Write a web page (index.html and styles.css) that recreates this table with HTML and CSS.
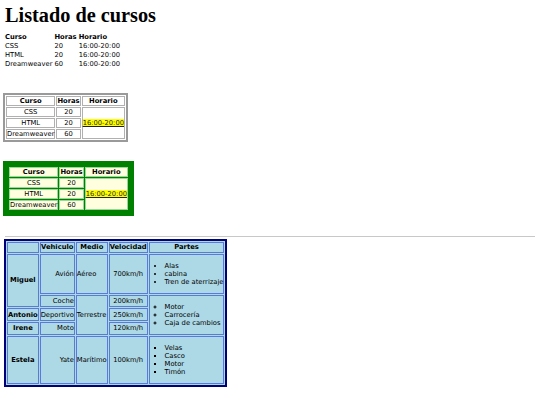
FILE: index.html
```html
<!DOCTYPE html>
<html lang="es">
<head>
<meta charset="utf-8">
<title>Listado de cursos</title>
<link rel="stylesheet" href="styles.css">
</head>
<body>
<h1 class="title">Listado de cursos</h1>

<table class="plain">
  <tr><th>Curso</th><th>Horas</th><th>Horario</th></tr>
  <tr><td>CSS</td><td>20</td><td>16:00-20:00</td></tr>
  <tr><td>HTML</td><td>20</td><td>16:00-20:00</td></tr>
  <tr><td>Dreamweaver</td><td>60</td><td>16:00-20:00</td></tr>
</table>

<table class="boxed">
  <tr><th>Curso</th><th>Horas</th><th>Horario</th></tr>
  <tr><td>CSS</td><td>20</td><td rowspan="3"><span class="hl">16:00-20:00</span></td></tr>
  <tr><td>HTML</td><td>20</td></tr>
  <tr><td>Dreamweaver</td><td>60</td></tr>
</table>

<table class="green">
  <tr><th>Curso</th><th>Horas</th><th>Horario</th></tr>
  <tr><td>CSS</td><td>20</td><td rowspan="3"><span class="hl">16:00-20:00</span></td></tr>
  <tr><td>HTML</td><td>20</td></tr>
  <tr><td>Dreamweaver</td><td>60</td></tr>
</table>

<hr class="rule">

<table class="vehicles">
  <tr><th></th><th>Vehiculo</th><th>Medio</th><th>Velocidad</th><th>Partes</th></tr>
  <tr>
    <th rowspan="2">Miguel</th>
    <td class="veh">Avión</td>
    <td>Aéreo</td>
    <td class="vel">700km/h</td>
    <td><ul class="disc"><li>Alas</li><li>cabina</li><li>Tren de aterrizaje</li></ul></td>
  </tr>
  <tr>
    <td class="veh">Coche</td>
    <td rowspan="3">Terrestre</td>
    <td class="vel">200km/h</td>
    <td rowspan="3"><ul class="circle"><li>Motor</li><li>Carrocería</li><li>Caja de cambios</li></ul></td>
  </tr>
  <tr>
    <th>Antonio</th>
    <td class="veh">Deportivo</td>
    <td class="vel">250km/h</td>
  </tr>
  <tr>
    <th>Irene</th>
    <td class="veh">Moto</td>
    <td class="vel">120km/h</td>
  </tr>
  <tr>
    <th>Estela</th>
    <td class="veh">Yate</td>
    <td>Marítimo</td>
    <td class="vel">100km/h</td>
    <td><ul class="square"><li>Velas</li><li>Casco</li><li>Motor</li><li>Timón</li></ul></td>
  </tr>
</table>
</body>
</html>
```

FILE: styles.css
```css
html, body {
  background: #ffffff;
}
body {
  margin: 0;
  padding: 3px 3px 0 3px;
  font-family: "DejaVu Sans", Verdana, sans-serif;
  font-size: 6.75px;
  color: #000;
}
.title {
  font-family: "Liberation Serif", "Times New Roman", serif;
  font-size: 20.3px;
  font-weight: bold;
  margin: 1px 0 6px 2px;
}
table {
  font-size: 6.75px;
  font-family: "DejaVu Sans", Verdana, sans-serif;
}
th {
  font-weight: bold;
}

/* table 1 */
.plain {
  border-collapse: separate;
  border-spacing: 0;
  margin-left: 1px;
}
.plain th, .plain td {
  padding: 0.4px 1px;
  text-align: left;
  vertical-align: middle;
}

/* table 2 */
.boxed {
  margin-top: 25px;
  border: 2px solid #9a9a9a;
  border-spacing: 1px;
  background: #fff;
}
.boxed th, .boxed td {
  border: 1px solid #b0b0b0;
  background: #fff;
  padding: 0;
  text-align: center;
  vertical-align: middle;
}

.hl {
  background: #ffff00;
  text-decoration: underline;
  color: #222;
}

/* table 3 */
.green {
  margin-top: 19px;
  border: 5px solid #008000;
  border-spacing: 1px;
  background: #008000;
}
.green th, .green td {
  border: 1px solid #98d898;
  background: #ffffe0;
  padding: 0;
  text-align: center;
  vertical-align: middle;
}

.rule {
  margin: 20px 2px 2px 2px;
  border: 0;
  border-top: 1px solid #c8c8c8;
  height: 0;
}

/* table 4 */
.vehicles {
  margin-left: 1px;
  border: 2px solid #00007a;
  border-spacing: 1px;
  background: #add8e6;
}
.vehicles th, .vehicles td {
  border: 1px solid #5a7ad8;
  background: #add8e6;
  padding: 0.25px 0;
  vertical-align: middle;
  text-align: left;
}
.vehicles th {
  text-align: center;
}
.vehicles .veh {
  text-align: right;
}
.vehicles .vel {
  text-align: center;
}
.vehicles ul {
  margin: 6.75px 0;
  padding-left: 15px;
}
.disc { list-style-type: disc; }
.circle { list-style-type: circle; }
.square { list-style-type: square; }
```
